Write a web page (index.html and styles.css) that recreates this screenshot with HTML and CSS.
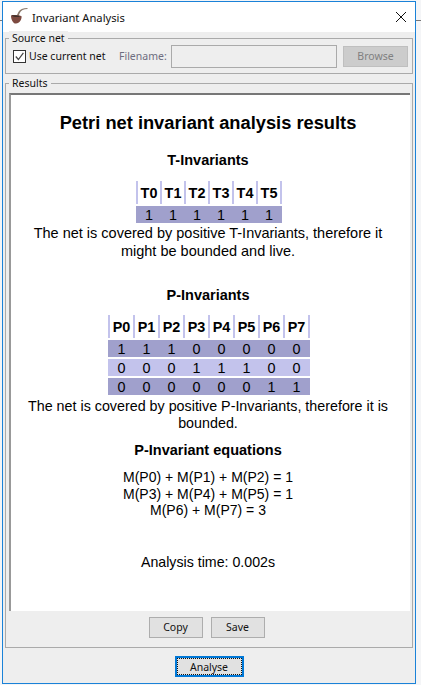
FILE: index.html
```html
<!DOCTYPE html>
<html lang="en">
<head>
<meta charset="utf-8">
<title>Invariant Analysis</title>
<link rel="stylesheet" href="styles.css">
</head>
<body>
<div class="window">
  <header class="titlebar">
    <svg class="pipe" width="18" height="18" viewBox="0 0 18 18">
      <path d="M17.5 1 C13.5 1 11 2.2 9.8 5 L8.6 8 L6.8 7.6 L8.4 4 C9.8 1.4 13 0 17.5 0 Z" fill="#8b7a6c"/>
      <path d="M1 7.4 C3.5 6.9 8 7 11.6 8.2 C11.8 11.5 9.6 15.4 6 15.5 C3 15.6 1 11.4 1 7.4 Z" fill="#7d4a40"/>
      <path d="M1.5 7.4 C4 7 7.5 7.2 10.4 8.2 C8 9.6 4 9.4 1.5 7.4 Z" fill="#3f302b"/>
    </svg>
    <span class="titletext">Invariant Analysis</span>
    <svg class="close" width="10" height="10" viewBox="0 0 10 10"><path d="M0 0 L10 10 M10 0 L0 10" stroke="#111" stroke-width="1" fill="none"/></svg>
  </header>
  <div class="body">
    <section class="group source">
      <span class="legend">Source net</span>
      <label class="check"><span class="box"><svg width="11" height="11" viewBox="0 0 11 11"><path d="M1.8 5.5 L4.4 8.5 L9.4 1.8" stroke="#444" stroke-width="1.2" fill="none"/></svg></span>Use current net</label>
      <span class="fname">Filename:</span>
      <span class="input"></span>
      <span class="btn browse">Browse</span>
    </section>
    <section class="group results">
      <span class="legend">Results</span>
      <div class="pane">
        <h1>Petri net invariant analysis results</h1>
        <h2 class="h-t">T-Invariants</h2>
        <table class="t-table">
          <thead><tr><th>T0</th><th>T1</th><th>T2</th><th>T3</th><th>T4</th><th>T5</th></tr></thead>
          <tbody><tr class="odd"><td>1</td><td>1</td><td>1</td><td>1</td><td>1</td><td>1</td></tr></tbody>
        </table>
        <p class="note note-t">The net is covered by positive T-Invariants, therefore it<br>might be bounded and live.</p>
        <h2 class="h-p">P-Invariants</h2>
        <table class="p-table">
          <thead><tr><th>P0</th><th>P1</th><th>P2</th><th>P3</th><th>P4</th><th>P5</th><th>P6</th><th>P7</th></tr></thead>
          <tbody>
            <tr class="odd"><td>1</td><td>1</td><td>1</td><td>0</td><td>0</td><td>0</td><td>0</td><td>0</td></tr>
            <tr class="even"><td>0</td><td>0</td><td>0</td><td>1</td><td>1</td><td>1</td><td>0</td><td>0</td></tr>
            <tr class="odd"><td>0</td><td>0</td><td>0</td><td>0</td><td>0</td><td>0</td><td>1</td><td>1</td></tr>
          </tbody>
        </table>
        <p class="note note-p">The net is covered by positive P-Invariants, therefore it is<br>bounded.</p>
        <h2 class="h-e">P-Invariant equations</h2>
        <p class="eqs">M(P0) + M(P1) + M(P2) = 1<br>M(P3) + M(P4) + M(P5) = 1<br>M(P6) + M(P7) = 3</p>
        <p class="time">Analysis time: 0.002s</p>
      </div>
      <div class="actions">
        <span class="btn action">Copy</span>
        <span class="btn action">Save</span>
      </div>
    </section>
    <div class="bottom"><span class="btn analyse"><span class="focus">Analyse</span></span></div>
  </div>
</div>
</body>
</html>
```

FILE: styles.css
```css
* { box-sizing: border-box; }
html, body { margin: 0; height: 685px; overflow: hidden; }
html { background: #f4f5f7; }
body { padding: 1px 5px 1px 2px; font-family: "Noto Sans", sans-serif; font-size: 10.5px; color: #111; background: linear-gradient(#f4f5f7 20px, #777 20px, #777 21px, #f4f5f7 21px); }
.window { width: 414px; height: 683px; border: 1px solid #1a82d8; background: #eeeeee; display: flex; flex-direction: column; }
.titlebar { height: 30px; flex: none; background: #fff; display: flex; align-items: center; padding: 0 9px 0 7px; }
.pipe { flex: none; }
.titletext { margin-left: 4px; font-size: 11.2px; flex: 1; }
.close { flex: none; }
.body { flex: 1; padding: 6px 2px 0 2px; display: flex; flex-direction: column; }
.group { position: relative; border: 1px solid #aaaaaa; }
.legend { position: absolute; left: 3px; top: -8px; padding: 0 3px; background: #eeeeee; line-height: 14px; }
.source { height: 36px; display: flex; align-items: center; padding: 0 3px 0 7px; }
.check { display: flex; align-items: center; width: 106px; }
.box { width: 13px; height: 13px; border: 1px solid #333; background: #fff; margin-right: 3px; display: block; line-height: 0; }
.fname { color: #6d6d80; width: 52px; }
.input { width: 166px; height: 23px; border: 1px solid #aaaaaa; background: #eeeeee; margin-right: 6px; }
.btn { display: flex; align-items: center; justify-content: center; border: 1px solid #adadad; background: #e1e1e1; padding-bottom: 1px; }
.browse { width: 65px; height: 21px; background: #cccccc; color: #808080; border-color: #bfbfbf; }
.results { margin-top: 9px; height: 565px; padding: 9px 2px 0 3px; }
.pane { height: 518px; overflow: hidden; background: #fff; border-top: 2px solid #777; border-left: 2px solid #999; padding-right: 5px; font-family: "Liberation Sans", Arial, sans-serif; text-align: center; color: #000; font-size: 14.2px; }
h1 { margin: 17px 0 0; font-size: 18.3px; line-height: 21px; font-weight: bold; }
h2 { margin: 0; font-size: 14.5px; line-height: 17px; font-weight: bold; }
.h-t { margin-top: 19px; }
table { border-collapse: separate; border-spacing: 0; font-size: 14.4px; table-layout: fixed; }
th { height: 23px; padding: 0; border-left: 2px solid #c3c3ec; font-weight: bold; }
th:last-child { border-right: 2px solid #c3c3ec; }
td { height: 19px; padding: 0 0 0 2px; border-top: 2px solid #fff; }
td:last-child { padding-right: 2px; }
.t-table { width: 146px; margin: 12px 0 0 calc(50% - 72px); }
.t-table th { width: 24px; }
.t-table th:last-child { width: 26px; }
.p-table { width: 202px; margin: 11px 0 0 calc(50% - 100px); }
.p-table th { width: 25px; }
.p-table th:last-child { width: 27px; }
.odd { background: #a0a0cc; }
.even { background: #c3c3ec; }
.note { margin: 0; }
.note-t { font-size: 14.5px; margin-top: 2px; line-height: 17.5px; }
.note-p { font-size: 14.3px; margin-top: 3px; line-height: 17px; }
.h-p { margin-top: 27px; }
.h-e { margin-top: 10px; }
.eqs { margin: 10px 0 0; line-height: 16.5px; font-size: 14px; }
.time { margin: 34px 0 0; line-height: 18px; }
.actions { display: flex; justify-content: center; gap: 8px; margin-top: 6px; padding-right: 6px; }
.action { width: 54px; height: 21px; }
.bottom { display: flex; justify-content: center; margin-top: 8px; }
.analyse { width: 69px; height: 21px; border: 2px solid #0078d7; padding: 0; }
.focus { display: flex; width: 100%; height: 100%; align-items: center; justify-content: center; border: 1px dotted #111; }
```
